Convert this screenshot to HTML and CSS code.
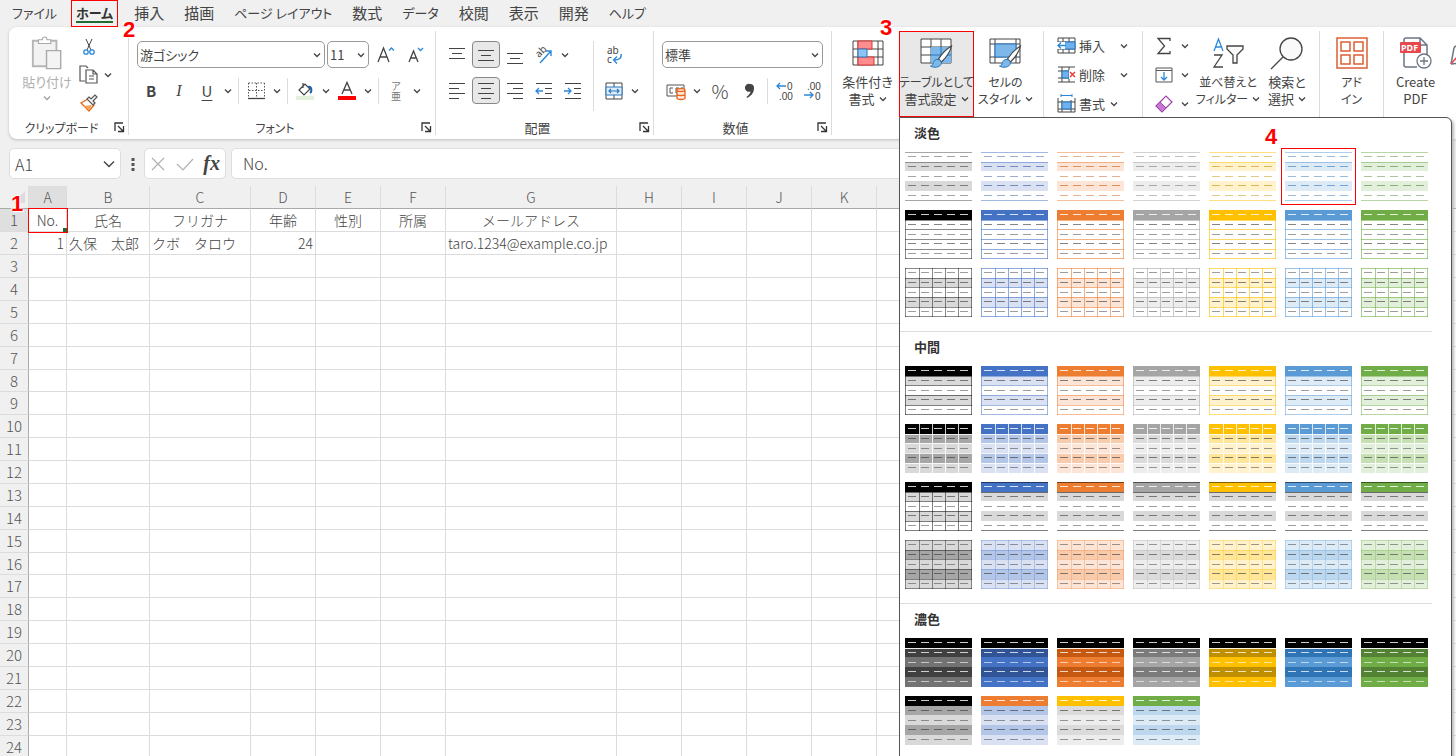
FILE: index.html
```html
<!DOCTYPE html>
<html lang="ja">
<head>
<meta charset="utf-8">
<title>Excel</title>
<link rel="stylesheet" href="styles.css">
</head>
<body>
<svg class="defs" aria-hidden="true">
  <symbol id="chev" viewBox="0 0 8 8"><path d="M1 2.5 4 5.5 7 2.5" fill="none" stroke="#444" stroke-width="1.3"/></symbol>
  <symbol id="launch" viewBox="0 0 11 11"><path d="M1 9V1h8M4 4l5 5M9.5 4v5.500H4" fill="none" stroke="#333" stroke-width="1.3"/></symbol>
  <symbol id="brush" viewBox="0 0 24 24"><path d="M22 1C17 4 12 9 9 14l3 3C17 12 21 6 22 1Z" fill="#fff" stroke="#444" stroke-width="1.2"/><path d="M8.500 14.500C5 14 4 17 3.500 19 3 20.500 1.500 21 1 21c3 2 10 2 11-3 0-1-1-3-3.500-3.500Z" fill="#7db8ea" stroke="#2e75b6"/></symbol>
</svg>
<div class="app">
  <nav class="tabs" aria-label="リボン タブ">
    <button class="tab kana first">ファイル</button>
    <button class="tab kana active">ホーム<span class="mark mark-2">2</span></button>
    <button class="tab">挿入</button>
    <button class="tab">描画</button>
    <button class="tab kana">ページ レイアウト</button>
    <button class="tab">数式</button>
    <button class="tab kana">データ</button>
    <button class="tab">校閲</button>
    <button class="tab">表示</button>
    <button class="tab">開発</button>
    <button class="tab kana">ヘルプ</button>
  </nav>

  <div class="ribbon">
    <section class="group g-clip">
      <div class="body clip">
        <button class="big paste" disabled>
          <svg width="34" height="36" viewBox="0 0 34 36"><path d="M2 5h25v27H2Z" fill="#f2f2f2" stroke="#b5b5b5" stroke-width="2"/><path d="M8 8V4h4c0-4 5-4 5 0h4v4Z" fill="#fff" stroke="#aaa" stroke-width="1.200"/><path d="M16.500 15.500h15v19h-15Z" fill="#f4f4f4" stroke="#aaa" stroke-width="1.500"/></svg>
          <span>貼り付け</span>
          <svg class="chev" width="8" height="8"><use href="#chev"/></svg>
        </button>
        <div class="stack">
          <button class="icon" aria-label="切り取り"><svg width="14" height="18" viewBox="0 0 14 18"><path d="M4 1l5 11M10 1 5 12" stroke="#444" fill="none"/><circle cx="4" cy="14" r="2.200" fill="none" stroke="#2b88d8" stroke-width="1.300"/><circle cx="10" cy="14" r="2.200" fill="none" stroke="#2b88d8" stroke-width="1.300"/></svg></button>
          <div class="row tight"><button class="icon" aria-label="コピー"><svg width="20" height="19" viewBox="0 0 20 19"><path d="M6 16H1V1h6l2 2M7 5h7l4 4v9H7ZM14 5v4h4M10 11h5M10 14h5" fill="none" stroke="#555" stroke-width="1.200"/></svg></button><button class="drop" aria-label="コピーのオプション"><svg width="8" height="8"><use href="#chev"/></svg></button></div>
          <button class="icon" aria-label="書式のコピー/貼り付け"><svg width="19" height="18" viewBox="0 0 19 18"><path d="M1 9l7-4 6 6-5 6Z" fill="#fff" stroke="#e8661c" stroke-width="1.400"/><path d="M4 12l8-1-3 5Z" fill="#f7a452"/><path d="M7 5l2-2 2 2 4-4 2 2-4 4 2 2-2 2Z" fill="#fff" stroke="#555" stroke-width="1.200"/></svg></button>
        </div>
      </div>
      <footer><span class="small">クリップボード</span><button aria-label="クリップボードの設定"><svg width="11" height="11"><use href="#launch"/></svg></button></footer>
    </section>

    <section class="group g-font">
      <div class="body rows">
        <div class="row font-row">
          <span class="combo combo-font"><select aria-label="フォント"><option>游ゴシック</option></select><svg width="8" height="8"><use href="#chev"/></svg></span>
          <span class="combo combo-size"><select aria-label="フォント サイズ"><option>11</option></select><svg width="8" height="8"><use href="#chev"/></svg></span>
          <button class="icon" aria-label="拡大"><svg width="18" height="18" viewBox="0 0 18 18"><path d="M1 16 6.500 2 12 16M3 11h7" fill="none" stroke="#444" stroke-width="1.300"/><path d="M12 4.500 14.500 2 17 4.500" fill="none" stroke="#2b88d8" stroke-width="1.300"/></svg></button>
          <button class="icon" aria-label="縮小"><svg width="16" height="18" viewBox="0 0 16 18"><path d="M1 16 5.500 5 10 16M3 12h5" fill="none" stroke="#444" stroke-width="1.300"/><path d="M10 2l2.500 2.500L15 2" fill="none" stroke="#2b88d8" stroke-width="1.300"/></svg></button>
        </div>
        <div class="row">
          <button class="icon bold">B</button><button class="icon italic">I</button><button class="icon under">U</button><button class="drop" aria-label="下線"><svg width="8" height="8"><use href="#chev"/></svg></button>
          <i class="sep"></i>
          <button class="icon" aria-label="罫線"><svg width="17" height="18" viewBox="0 0 17 18"><path d="M.5 1h16M.5 1v14M16.500 1v14M8.500 1v14M1 8.500h15" stroke="#555" stroke-dasharray="1.500 1.500" fill="none"/><path d="M0 16.500h17" stroke="#444" stroke-width="1.300"/></svg></button><button class="drop" aria-label="罫線の種類"><svg width="8" height="8"><use href="#chev"/></svg></button>
          <i class="sep"></i>
          <button class="icon" aria-label="塗りつぶし"><svg width="18" height="18" viewBox="0 0 18 18"><path d="M3 8l6-6 5 5-6 6ZM7 1v5" fill="#fff" stroke="#444" stroke-width="1.200"/><path d="M12 5c3-1 4 2 3 5l-1 1" fill="none" stroke="#1f5fa8" stroke-width="2"/><path d="M0 14h18v4H0Z" fill="#e2efda"/></svg></button><button class="drop" aria-label="塗りつぶしの色"><svg width="8" height="8"><use href="#chev"/></svg></button>
          <button class="icon" aria-label="フォントの色"><svg width="18" height="18" viewBox="0 0 18 18"><path d="M4 12 9 0.500 14 12M6 8h6" fill="none" stroke="#444" stroke-width="1.300"/><path d="M0 14h18v4H0Z" fill="red"/></svg></button><button class="drop" aria-label="色の選択"><svg width="8" height="8"><use href="#chev"/></svg></button>
          <i class="sep"></i>
          <button class="icon ruby" aria-label="ふりがな"><span>ア</span><span>亜</span></button><button class="drop" aria-label="ふりがなの設定"><svg width="8" height="8"><use href="#chev"/></svg></button>
        </div>
      </div>
      <footer><span class="small">フォント</span><button aria-label="フォントの設定"><svg width="11" height="11"><use href="#launch"/></svg></button></footer>
    </section>

    <section class="group g-align">
      <div class="body align">
        <div class="align-grid">
          <button class="icon" aria-label="上揃え"><svg width="18" height="20" viewBox="0 0 18 20"><path d="M1 3.500h16M4 8.500h10M1 13.500h16" stroke="#444" stroke-width="1.200"/></svg></button>
          <button class="icon on" aria-label="上下中央揃え"><svg width="18" height="20" viewBox="0 0 18 20"><path d="M1 5.500h16M4 10.500h10M1 15.500h16" stroke="#444" stroke-width="1.200"/></svg></button>
          <button class="icon" aria-label="下揃え"><svg width="18" height="20" viewBox="0 0 18 20"><path d="M1 8.500h16M4 13.500h10M1 18.500h16" stroke="#444" stroke-width="1.200"/></svg></button>
          <button class="icon" aria-label="方向"><svg width="20" height="20" viewBox="0 0 20 20"><text x="0" y="0" transform="translate(5 13) rotate(-45)" class="ab">ab</text><path d="M6 18 17 6M12 6h5v5" fill="none" stroke="#2b88d8" stroke-width="1.400"/></svg></button>
          <button class="drop" aria-label="方向の種類"><svg width="8" height="8"><use href="#chev"/></svg></button>
          <button class="icon" aria-label="左揃え"><svg width="18" height="18" viewBox="0 0 18 18"><path d="M1 1.500h16M1 6.500h10M1 11.500h16M1 16.500h10" stroke="#444" stroke-width="1.200"/></svg></button>
          <button class="icon on" aria-label="中央揃え"><svg width="18" height="18" viewBox="0 0 18 18"><path d="M1 1.500h16M4 6.500h10M1 11.500h16M4 16.500h10" stroke="#444" stroke-width="1.200"/></svg></button>
          <button class="icon" aria-label="右揃え"><svg width="18" height="18" viewBox="0 0 18 18"><path d="M1 1.500h16M7 6.500h10M1 11.500h16M7 16.500h10" stroke="#444" stroke-width="1.200"/></svg></button>
          <button class="icon" aria-label="インデントを減らす"><svg width="18" height="18" viewBox="0 0 18 18"><path d="M1 1.500h16M10 6.500h7M10 11.500h7M1 16.500h16" stroke="#444" stroke-width="1.200"/><path d="M8 9H1M4 6 1 9l3 3" fill="none" stroke="#2b88d8" stroke-width="1.300"/></svg></button>
          <button class="icon" aria-label="インデントを増やす"><svg width="18" height="18" viewBox="0 0 18 18"><path d="M1 1.500h16M10 6.500h7M10 11.500h7M1 16.500h16" stroke="#444" stroke-width="1.200"/><path d="M0 9h7M4 6l3 3-3 3" fill="none" stroke="#2b88d8" stroke-width="1.300"/></svg></button>
        </div>
        <i class="sep tall"></i>
        <div class="rows">
          <div class="row"><button class="icon" aria-label="折り返し"><svg width="18" height="20" viewBox="0 0 18 20"><text x="2" y="9" class="ab">ab</text><text x="2" y="18" class="ab">c</text><path d="M16 9c1 4-2 6-7 6M12 11.500 8.500 15l3.500 3.500" fill="none" stroke="#2b88d8" stroke-width="1.400"/></svg></button></div>
          <div class="row"><button class="icon" aria-label="セルを結合"><svg width="18" height="18" viewBox="0 0 18 18"><path d="M1 1h16v16H1ZM9 1v4M9 13v4" fill="none" stroke="#444"/><path d="M1 5h16v8H1Z" fill="#dcecf9" stroke="#2b78c0"/><path d="M4 9h10M6 7 4 9l2 2M12 7l2 2-2 2" fill="none" stroke="#2b78c0" stroke-width="1.200"/></svg></button><button class="drop" aria-label="結合の種類"><svg width="8" height="8"><use href="#chev"/></svg></button></div>
        </div>
      </div>
      <footer><span>配置</span><button aria-label="配置の設定"><svg width="11" height="11"><use href="#launch"/></svg></button></footer>
    </section>

    <section class="group g-num">
      <div class="body rows">
        <div class="row"><span class="combo combo-num"><select aria-label="表示形式"><option>標準</option></select><svg width="8" height="8"><use href="#chev"/></svg></span></div>
        <div class="row">
          <button class="icon" aria-label="通貨"><svg width="20" height="18" viewBox="0 0 20 18"><path d="M1 3h17v11H1Z" fill="#fff" stroke="#555"/><path d="M7 6H4v5h3M13 6h-3v5h3M16 5v2" fill="none" stroke="#555"/><path d="M11 8v8c0 2 8 2 8 0V8c0-2-8-2-8 0c0 2 8 2 8 0M11 12c0 2 8 2 8 0" fill="#fdeadc" stroke="#e8661c" stroke-width="1.300"/></svg></button><button class="drop" aria-label="通貨の種類"><svg width="8" height="8"><use href="#chev"/></svg></button>
          <button class="icon pct" aria-label="パーセント">%</button>
          <button class="icon" aria-label="桁区切り"><svg width="10" height="16" viewBox="0 0 10 16"><path d="M5 1a4 4 0 0 1 4 4c0 5-3 8-7 10l-.5-1C4 12 5.500 10 5.500 8.500A4 4 0 1 1 5 1Z" fill="#444"/></svg></button>
          <i class="sep"></i>
          <button class="icon" aria-label="小数点以下を増やす"><svg width="18" height="20" viewBox="0 0 18 20"><text x="11" y="9" class="dec">0</text><text x="3" y="19" class="dec">.00</text><path d="M10 5H1M4 2 1 5l3 3" fill="none" stroke="#2b88d8" stroke-width="1.300"/></svg></button>
          <button class="icon" aria-label="小数点以下を減らす"><svg width="18" height="20" viewBox="0 0 18 20"><text x="3" y="9" class="dec">.00</text><text x="11" y="19" class="dec">0</text><path d="M0 14h9M6 11l3 3-3 3" fill="none" stroke="#2b88d8" stroke-width="1.300"/></svg></button>
        </div>
      </div>
      <footer><span>数値</span><button aria-label="数値の設定"><svg width="11" height="11"><use href="#launch"/></svg></button></footer>
    </section>

    <section class="group g-style">
      <button class="big">
        <svg width="32" height="28" viewBox="0 0 32 28"><path d="M1 2h30v24H1ZM1 10h30M1 18h30M6 2v24M26 2v24" fill="#fff" stroke="#444"/><path d="M6 2h14v8H6ZM6 18h16v8H6Z" fill="#ff8d8d" stroke="#d33"/><path d="M6 10h9v8H6Z" fill="#8cc4f4" stroke="#2b78c0"/></svg>
        <span>条件付き</span><span>書式 <svg width="8" height="8"><use href="#chev"/></svg></span>
      </button>
      <button class="big pressed">
        <svg width="34" height="32" viewBox="0 0 34 32"><path d="M1 2h30v24H1ZM1 10h30M1 18h30M11 2v24M21 2v24" fill="#fff" stroke="#444"/><path d="M11 10h20v16H11Z" fill="#7db8ea"/><path d="M11 18h20M21 10v16" stroke="#2b78c0"/><use href="#brush" x="9" y="8" width="25" height="24"/></svg>
        <span class="small">テーブルとして</span><span>書式設定 <svg width="8" height="8"><use href="#chev"/></svg></span>
        <span class="mark mark-3">3</span>
      </button>
      <button class="big">
        <svg width="34" height="32" viewBox="0 0 34 32"><path d="M1 2h30v24H1ZM1 7h30M1 20h30M6 2v24M27 2v24" fill="#fff" stroke="#444"/><path d="M6 7h21v13H6Z" fill="#7db8ea" stroke="#2b78c0"/><use href="#brush" x="9" y="8" width="25" height="24"/></svg>
        <span class="small">セルの</span><span class="small">スタイル <svg width="8" height="8"><use href="#chev"/></svg></span>
      </button>
    </section>

    <section class="group g-cells">
      <button class="line"><svg width="19" height="18" viewBox="0 0 19 18"><path d="M1 1h17v15H1ZM1 5h17M1 12h17M6 1v15M12 1v15" fill="#fff" stroke="#444"/><path d="M7 5h11v7H7Z" fill="#6db1ee" stroke="#2b78c0"/><path d="M0 5h8v7H0Z" fill="#fff"/><path d="M9 8.500H1M4 5.500 1 8.500l3 3" fill="none" stroke="#2b88d8" stroke-width="1.300"/></svg><span class="cap">挿入</span><svg width="8" height="8"><use href="#chev"/></svg></button>
      <button class="line"><svg width="19" height="18" viewBox="0 0 19 18"><path d="M1 1h17M1 5h17M1 12h17M1 16h17M5 1v15M12 1v4M12 12v4" fill="none" stroke="#444"/><path d="M5 5h7v7H5Z" fill="#6db1ee" stroke="#2b78c0"/><path d="M12 4h7v9h-7Z" fill="#fff"/><path d="M13 6l5 5M18 6l-5 5" stroke="#e33" stroke-width="1.400"/></svg><span class="cap">削除</span><svg width="8" height="8"><use href="#chev"/></svg></button>
      <button class="line near"><svg width="19" height="19" viewBox="0 0 19 19"><path d="M1 4v14h17V4M1 8h17M1 15h17M5 6v12M14 6v12" fill="#fff" stroke="#444"/><path d="M5 8h9v7H5Z" fill="#6db1ee" stroke="#2b78c0"/><path d="M4 1.500h11M4 0v3M15 0v3" fill="none" stroke="#2b88d8"/></svg><span class="cap">書式</span><svg width="8" height="8"><use href="#chev"/></svg></button>
    </section>

    <section class="group g-edit">
      <div class="lines">
        <button class="line" aria-label="合計"><svg width="18" height="18" viewBox="0 0 18 18"><path d="M15 4V1.500H3L9.500 9 3 16.500h12V14" fill="none" stroke="#444" stroke-width="1.300"/></svg><svg width="8" height="8"><use href="#chev"/></svg></button>
        <button class="line" aria-label="フィル"><svg width="18" height="18" viewBox="0 0 18 18"><path d="M1 2h16v14H1ZM1 4.500h16" fill="#fff" stroke="#555"/><path d="M9 6v8M6 11l3 3 3-3" fill="none" stroke="#2b88d8" stroke-width="1.300"/></svg><svg width="8" height="8"><use href="#chev"/></svg></button>
        <button class="line" aria-label="クリア"><svg width="18" height="18" viewBox="0 0 18 18"><path d="M1 11 11 1l6 6L7 17Z" fill="#fff" stroke="#a33fb0" stroke-width="1.200"/><path d="M1 11l4-4 6 6-4 4Z" fill="#c778d0" stroke="#a33fb0"/></svg><svg width="8" height="8"><use href="#chev"/></svg></button>
      </div>
      <button class="big">
        <svg width="32" height="32" viewBox="0 0 32 32"><path d="M2 14 6.500 2 11 14M3.500 10h6" fill="none" stroke="#2b88d8" stroke-width="1.300"/><path d="M2 18h8L2 30h9" fill="none" stroke="#444" stroke-width="1.300"/><path d="M15 9h16v3l-6 6v8h-4v-8l-6-6Z" fill="#fafafa" stroke="#444" stroke-width="1.300"/></svg>
        <span class="small">並べ替えと</span><span class="small">フィルター <svg width="8" height="8"><use href="#chev"/></svg></span>
      </button>
      <button class="big">
        <svg width="34" height="34" viewBox="0 0 34 34"><circle cx="21" cy="13" r="11" fill="#fafafa" stroke="#444" stroke-width="1.300"/><path d="M13 21 1 33" stroke="#444" stroke-width="1.300"/></svg>
        <span>検索と</span><span>選択 <svg width="8" height="8"><use href="#chev"/></svg></span>
      </button>
    </section>

    <section class="group g-add">
      <button class="big">
        <svg width="32" height="32" viewBox="0 0 32 32"><path d="M1 1h30v30H1ZM5 5h9v9H5ZM18 5h9v9h-9ZM5 18h9v9H5ZM18 18h9v9h-9Z" fill="#fff" stroke="#dd6036" stroke-width="1.500"/></svg>
        <span class="small">アド</span><span class="small">イン</span>
      </button>
    </section>

    <section class="group g-pdf">
      <button class="big">
        <svg width="34" height="32" viewBox="0 0 34 32"><path d="M5 6V3q0-2 2-2h14l7 7v11M21 1v7h7M5 16v12q0 2 2 2h11" fill="none" stroke="#6b7684" stroke-width="1.500"/><rect x="1" y="5" width="21" height="11" rx="1" fill="#e5484d"/><text x="2" y="14" class="pdf">PDF</text><circle cx="25" cy="24" r="7" fill="#fff" stroke="#6b7684" stroke-width="1.300"/><path d="M25 20v8M21 24h8" stroke="#6b7684" stroke-width="1.300"/></svg>
        <span>Create</span><span>PDF</span>
      </button>
      <svg class="cut" width="16" height="32" viewBox="0 0 16 32"><path d="M2 28 5 12q1-2 3-2h8M2 28l9-1" fill="none" stroke="#6b7684" stroke-width="1.500"/><path d="M2 28l6-7" stroke="#e5484d" stroke-width="1.500"/></svg>
    </section>
  </div>

  <div class="formula">
    <span class="namebox"><input aria-label="名前ボックス" value="A1"><svg width="14" height="14" viewBox="0 0 14 14"><path d="M2 4.500 7 9.500l5-5" fill="none" stroke="#444" stroke-width="1.400"/></svg></span>
    <svg class="dots" width="4" height="14" viewBox="0 0 4 14"><path d="M.5 1h3v3h-3ZM.5 6h3v3h-3ZM.5 11h3v3h-3Z" fill="#555"/></svg>
    <span class="fx">
      <button aria-label="キャンセル"><svg width="16" height="16" viewBox="0 0 16 16"><path d="M2 2l12 12M14 2 2 14" stroke="#b0b0b0" stroke-width="1.200"/></svg></button>
      <button aria-label="入力"><svg width="18" height="16" viewBox="0 0 18 16"><path d="M1 8l6 6L17 3" fill="none" stroke="#b0b0b0" stroke-width="1.200"/></svg></button>
      <button class="fn" aria-label="関数の挿入">fx</button>
    </span>
    <input class="value" aria-label="数式バー" value="No.">
  </div>

  <main class="sheet">
    <table>
      <colgroup><col class="c-head"><col class="c-a"><col class="c-b"><col class="c-c"><col class="c-d" span="3"><col class="c-g"><col class="c-d" span="13"></colgroup>
      <thead><tr id="letters"></tr></thead>
      <tbody id="cells"></tbody>
    </table>
  </main>

  <aside class="gallery" id="gallery" aria-label="テーブルとして書式設定"></aside>
</div>
<script src="app.js"></script>
</body>
</html>
```
FILE: styles.css
```css
* { box-sizing: border-box; }
body {
  margin: 0;
  background: #f0f0f0;
  color: #444;
  font: 14px/17px "Noto Sans CJK JP", "Noto Sans", sans-serif;
  overflow: hidden;
}
button, input, select { font: inherit; color: inherit; margin: 0; padding: 0; border: 0; background: none; }
button { display: inline-flex; align-items: center; justify-content: center; white-space: nowrap; }
svg { flex: none; display: block; overflow: visible; }
.defs { position: absolute; width: 0; height: 0; }
.app { position: relative; height: 100vh; display: flex; flex-direction: column; overflow: hidden; }

.tabs { display: flex; align-items: flex-start; height: 27px; padding-left: 10px; gap: 12px; font-feature-settings: "palt"; flex: none; }
.tab { height: 25px; padding: 0 4px; font-size: 15px; }
.tab.first { padding: 0 2px; }
.tab.kana { font-size: 13px; }
.tab.active { position: relative; height: 27px; border: 1px solid red; padding-bottom: 2px; font-weight: bold; color: #333; }
.tab.active::after { content: ""; position: absolute; left: 4px; right: 4px; bottom: 3px; height: 2px; background: #1e6b34; }
.mark { position: absolute; z-index: 5; font: bold 22px/22px "Liberation Sans", Arial, sans-serif; color: red; text-shadow: 0 0 2px #fff, 1px 1px 1px #fff, -1px -1px 1px #fff; }
.mark-1 { left: -18px; top: -16px; }
.mark-2 { right: -18px; top: 18px; }
.mark-3 { left: -20px; top: -15px; }
.mark-4 { left: -20px; top: -26px; }

.ribbon {
  display: flex; flex: none; height: 112px; margin-left: 9px; padding: 4px 0;
  background: #fff; border-radius: 8px 0 0 8px; box-shadow: 0 1px 3px #bbb;
  font-feature-settings: "palt"; font-size: 13px;
}
.small { font-size: 12px; }
.group { flex: none; display: flex; border-right: 1px solid #dcdcdc; }
.g-clip, .g-font, .g-align, .g-num { flex-direction: column; justify-content: space-between; }
.g-clip { width: 120px; }
.g-font { width: 307px; }
.g-align { width: 218px; }
.g-num { width: 178px; }
.g-style { width: 212px; padding-left: 4px; }
.g-cells { width: 99px; flex-direction: column; padding-left: 13px; gap: 10px; padding-top: 5px; }
.g-edit { width: 177px; padding-left: 12px; }
.g-add { width: 64px; }
.g-pdf { width: 88px; border: 0; overflow: hidden; }
.group footer { display: flex; align-items: center; height: 16px; padding-right: 3px; }
.group footer span { flex: 1; text-align: center; }
.body { flex: 1; padding: 10px 8px 0; }
.rows { display: flex; flex-direction: column; gap: 9px; }
.row { display: flex; align-items: center; height: 27px; }
.icon { flex: none; width: 28px; height: 27px; }
.drop { flex: none; width: 14px; height: 27px; }
.sep { flex: none; width: 1px; height: 26px; margin: 0 3px; background: #dcdcdc; }
.sep.tall { height: 70px; margin: 0 6px; }
.on { background: #e8e8e8; border: 1px solid #888; border-radius: 4px; }
.bold { font-weight: bold; font-size: 15px; }
.italic { font: italic 16px "Liberation Serif", serif; }
.under { text-decoration: underline; font-size: 15px; text-underline-offset: 3px; }
.ruby { flex-direction: column; font-size: 10px; line-height: 10px; color: #777; }
.pct { font-size: 19px; font-weight: 300; width: 32px; }
.ab { font: 10px "Noto Sans", sans-serif; fill: #444; }
.dec { font: 10px "Liberation Sans", sans-serif; fill: #444; }
.pdf { font: bold 9px "Noto Sans", sans-serif; fill: #fff; }

.body.clip { display: flex; padding: 0 0 0 13px; gap: 5px; }
.stack { display: flex; flex-direction: column; gap: 1px; padding-top: 2px; }
.stack .icon { width: 24px; }
.stack .row { height: 27px; }
.big { flex: none; position: relative; flex-direction: column; justify-content: flex-start; height: 86px; padding-top: 5px; line-height: 17px; }
.big > svg:first-child { height: 34px; margin-bottom: 3px; }
.big span { display: flex; align-items: center; justify-content: center; gap: 4px; }
.big span.mark { display: block; }
.paste { width: 50px; color: #b0b0b0; }
.paste .chev { opacity: .5; margin-top: 4px; }
.g-style .big { width: 63px; }
.g-style .pressed { width: 75px; background: #e8e8e8; border: 1px solid red; padding-top: 4px; }
.g-edit .big { width: 66px; }
.g-edit .big:last-child { width: 52px; }
.g-add .big, .g-pdf .big { width: 63px; }
.lines { display: flex; flex-direction: column; gap: 10px; padding-top: 5px; width: 40px; }
.line { gap: 8px; height: 19px; justify-content: flex-start; }
.g-cells .line { gap: 3px; }
.cap { width: 38px; text-align: left; }
.near .cap { width: 28px; }
.cut { margin: 5px 0 0 2px; }

.combo { position: relative; flex: none; display: flex; align-items: center; height: 27px; }
.combo select { appearance: none; width: 100%; height: 100%; padding-left: 2px; border: 1px solid #999; border-radius: 5px; background: #fff; }
.combo svg { position: absolute; right: 4px; pointer-events: none; }
.combo-font { width: 188px; }
.combo-size { width: 42px; margin: 0 2px; }
.combo-num { width: 161px; }
.font-row .icon { width: 30px; }

.body.align { display: flex; padding-left: 6px; }
.align-grid { display: grid; grid-template-columns: repeat(5, 29px); row-gap: 9px; align-content: start; justify-items: center; }
.align-grid .drop { justify-self: start; }

.formula { display: flex; align-items: center; flex: none; height: 31px; margin: 9px 9px 7px; gap: 5px; font-size: 16px; line-height: 20px; font-weight: 300; }
.namebox, .fx, .value { height: 31px; background: #fff; border: 1px solid #dedede; border-radius: 5px; }
.namebox { display: flex; align-items: center; width: 112px; padding: 0 4px 0 5px; }
.namebox input { flex: 1; min-width: 0; }
.dots { margin: 0 4px 0 5px; }
.fx { display: flex; align-items: center; justify-content: space-between; width: 82px; padding: 0 5px; }
.fn { font: italic bold 20px "Liberation Serif", serif; }
.value { flex: 1; min-width: 0; padding: 0 0 2px 11px; }

.sheet { flex: 1; overflow: hidden; }
table { border-collapse: separate; border-spacing: 0; table-layout: fixed; width: 1462px; color: #444; font-weight: 300; }
.c-head { width: 29px; }
.c-a { width: 38px; }
.c-b { width: 83px; }
.c-c { width: 101px; }
.c-d { width: 65px; }
.c-g { width: 171px; }
th, td { padding: 0 2px; font-weight: 300; border-right: 1px solid #dcdcdc; border-bottom: 1px solid #dcdcdc; white-space: nowrap; line-height: 20px; }
thead th { height: 23px; border-bottom-color: #aaa; color: #555; }
tbody tr { height: 23px; }
tbody tr:nth-child(8n) { height: 22px; }
tbody th { font-size: 15px; color: #555; border-right-color: #aaa; }
td { background: #fff; }
th.sel { background: #dfdfdf; }
.corner { border-right-color: #ddd; }
.corner svg { margin-left: auto; }
.center { text-align: center; }
.right { text-align: right; }
.current { position: relative; z-index: 1; outline: 1px solid red; }
.current::after { content: ""; position: absolute; right: -1px; bottom: -1px; width: 4px; height: 4px; background: #1e6b34; }

.gallery { position: absolute; z-index: 4; top: 117px; right: 4px; width: 553px; height: 700px; background: #fff; border: 1px solid #555; border-radius: 0 6px 0 0; box-shadow: 2px 2px 3px #bbb; }
.gallery section { padding-bottom: 14px; margin-right: 19px; border-bottom: 1px solid #ddd; }
.gallery section:last-child { border: 0; }
.gallery h2 { margin: 0 0 4px; padding-left: 14px; font-size: 13px; line-height: 30px; color: #333; }
.swatches { display: grid; grid-template-columns: repeat(7, 67px); gap: 9px; padding-left: 5px; }
.swatch { position: relative; width: 67px; height: 49px; }
.swatch.picked { outline: 1px solid red; outline-offset: 3px; }
```
FILE: app.js
```js
const themes = [
  { base: '#000000', light: '#d9d9d9', mid: '#a6a6a6', dark: '#404040' },
  { base: '#4472c4', light: '#d9e1f2', mid: '#b4c6e7', dark: '#305496' },
  { base: '#ed7d31', light: '#fce4d6', mid: '#f8cbad', dark: '#c65911' },
  { base: '#a5a5a5', light: '#ededed', mid: '#dbdbdb', dark: '#7b7b7b' },
  { base: '#ffc000', light: '#fff2cc', mid: '#ffe699', dark: '#bf8f00' },
  { base: '#5b9bd5', light: '#ddebf7', mid: '#bdd7ee', dark: '#2f75b5' },
  { base: '#70ad47', light: '#e2efda', mid: '#c6e0b4', dark: '#548235' }
];
const W = '#ffffff';
const YS = [0, 10, 19, 29, 39, 49];
const XS = [0, 14, 27, 40, 53, 67];

// Each style: fills per row, line colour, which lines to draw, dash colours.
const styles = {
  light1: t => ({ fills: [W, t.light, W, t.light, W], line: t.base, alpha: t.base === '#000000' ? 0.35 : 0.5, h: [0, 1, 5], dash: t.dark, dashAlpha: 0.6 }),
  light2: t => ({ fills: [t.base, W, W, W, W], line: t.base, alpha: t.base === '#000000' ? 0.45 : 0.6, h: [0, 1, 2, 3, 4, 5], box: true, head: W }),
  light3: t => ({ fills: [W, t.light, W, t.light, W], line: t.base, alpha: t.base === '#000000' ? 0.45 : 0.6, h: [0, 1, 2, 3, 4, 5], box: true, v: true }),
  mid1: t => ({ fills: [t.base, t.light, W, t.light, W], line: t.base, alpha: 0.5, h: [1, 2, 3, 4, 5], box: true, head: W }),
  mid2: t => ({ fills: [t.base, t.mid, t.light, t.mid, t.light], line: W, alpha: 0.8, h: [1, 2, 3, 4], v: true, head: W }),
  mid3: t => ({ fills: [t.base, '#d9d9d9', W, '#d9d9d9', W], line: '#000000', alpha: 0.5, h: t.base === '#000000' ? [1, 2, 3, 4, 5] : [0, 1, 5], v: t.base === '#000000', box: t.base === '#000000', head: W }),
  mid4: t => ({ fills: [t.light, t.mid, t.light, t.mid, t.light], line: t.base, alpha: t.base === '#000000' ? 0.4 : 0.3, h: [0, 1, 2, 3, 4, 5], v: true, box: true }),
  dark1: t => {
    const b = t.base === '#000000' ? '#737373' : t.base;
    return { fills: ['#000000', t.dark, b, t.dark, b], line: W, alpha: 0.9, h: [1], head: W, dash: W, dashAlpha: 0.75 };
  },
  dark2: t => ({ fills: [t.head, t.mid, t.light, t.mid, t.light], line: W, alpha: 0, h: [], head: W })
};

function swatch(kind, theme) {
  const s = styles[kind](theme);
  const out = [];
  s.fills.forEach((f, i) => out.push(`<rect x="0" y="${YS[i]}" width="67" height="${YS[i + 1] - YS[i]}" fill="${f}"/>`));
  let d = '';
  s.h.forEach(i => { d += `M0 ${Math.min(YS[i], 48) + 0.5}h67`; });
  if (s.v) XS.slice(1, 5).forEach(x => { d += `M${x + 0.5} ${s.head && s.line !== W ? 10 : 0}V49`; });
  if (s.box) d += 'M.5 0V49M66.5 0V49';
  out.push(`<path d="${d}" fill="none" stroke="${s.line}" stroke-opacity="${s.alpha}"/>`);
  [4, 14, 24, 33, 43].forEach((y, r) => {
    const head = r === 0 && s.head;
    const color = head ? s.head : s.dash || '#333333';
    const alpha = head ? 0.8 : (s.dashAlpha || 0.6) * (r % 2 ? 1 : 0.8);
    out.push(`<path d="M3 ${y + 0.5}h8m5 0h8m5 0h8m5 0h8m5 0h8" stroke="${color}" stroke-opacity="${alpha}"/>`);
  });
  return `<svg width="67" height="49" viewBox="0 0 67 49">${out.join('')}</svg>`;
}

const head2 = [
  { ...themes[0], head: '#000000' },
  { ...themes[1], head: '#ed7d31' },
  { ...themes[3], head: '#ffc000' },
  { ...themes[5], head: '#70ad47' }
];

const sections = [
  ['淡色', ['light1', 'light2', 'light3']],
  ['中間', ['mid1', 'mid2', 'mid3', 'mid4']],
  ['濃色', ['dark1', 'dark2']]
];

document.getElementById('gallery').innerHTML = sections.map(([name, kinds]) => {
  const items = kinds.map(k => (k === 'dark2' ? head2 : themes).map((t, i) => {
    const picked = k === 'light1' && i === 5;
    return `<button class="swatch${picked ? ' picked' : ''}" aria-label="${name} ${k} ${i + 1}">${swatch(k, t)}${picked ? '<span class="mark mark-4">4</span>' : ''}</button>`;
  }).join('')).join('');
  return `<section><h2>${name}</h2><div class="swatches">${items}</div></section>`;
}).join('');

const letters = 'ABCDEFGHIJKLMNOPQRST'.split('');
document.getElementById('letters').innerHTML =
  '<th class="corner"><svg width="14" height="14" viewBox="0 0 14 14"><path d="M13 1v12H1Z" fill="#dcdcdc"/></svg></th>' +
  letters.map((l, i) => `<th${i ? '' : ' class="sel"'}>${l}</th>`).join('');

const data = [
  [['No.', 'center current'], ['氏名', 'center'], ['フリガナ', 'center'], ['年齢', 'center'], ['性別', 'center'], ['所属', 'center'], ['メールアドレス', 'center']],
  [['1', 'right'], ['久保　太郎', ''], ['クボ　タロウ', ''], ['24', 'right'], ['', ''], ['', ''], ['taro.1234@example.co.jp', '']]
];
let rows = '';
for (let r = 0; r < 25; r++) {
  rows += `<tr><th${r ? '' : ' class="sel"'}>${r + 1}</th>`;
  letters.forEach((_, c) => {
    const [text, cls] = (data[r] && data[r][c]) || ['', ''];
    const mark = r === 0 && c === 0 ? '<span class="mark mark-1">1</span>' : '';
    rows += `<td class="${cls}">${text}${mark}</td>`;
  });
  rows += '</tr>';
}
document.getElementById('cells').innerHTML = rows;
```
